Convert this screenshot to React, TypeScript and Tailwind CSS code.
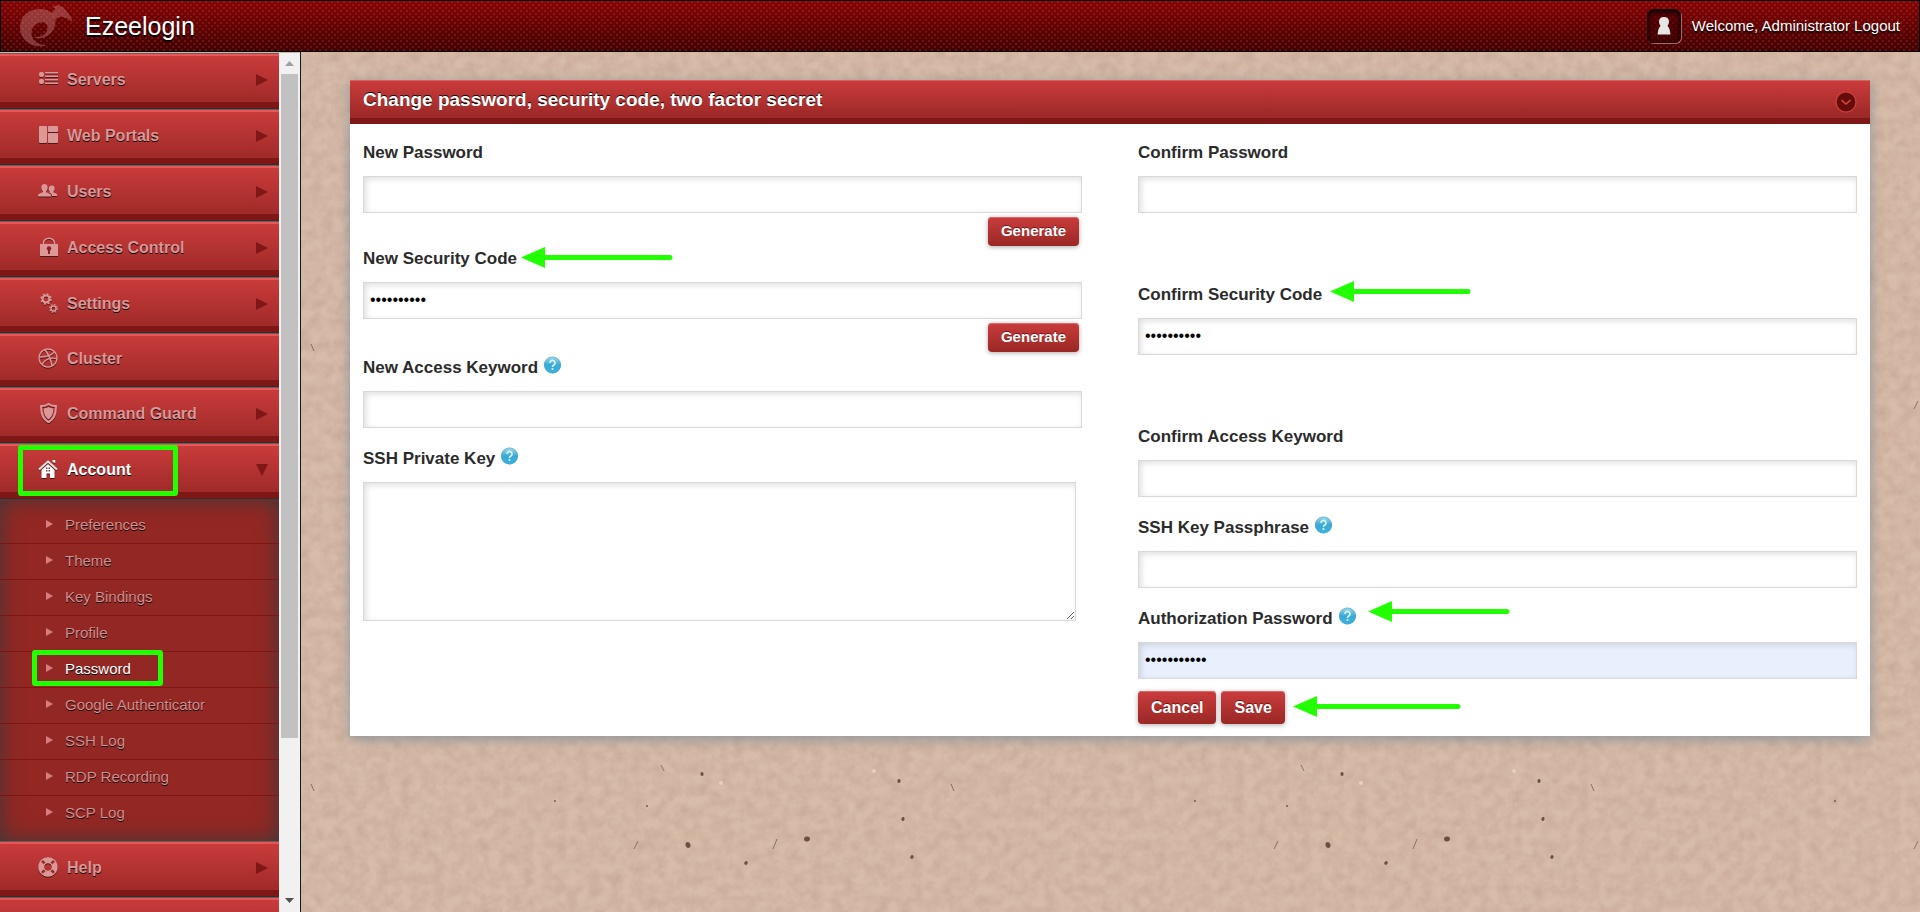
import type { ReactNode } from "react"
import { FaDribbble, FaLifeRing } from "react-icons/fa"

const menu = [
    { name: "Servers", icon: <ServersIcon />, sub: true },
    { name: "Web Portals", icon: <PortalsIcon />, sub: true },
    { name: "Users", icon: <UsersIcon />, sub: true },
    { name: "Access Control", icon: <LockIcon />, sub: true },
    { name: "Settings", icon: <GearsIcon />, sub: true },
    { name: "Cluster", icon: <FaDribbble size={20} />, sub: false },
    { name: "Command Guard", icon: <ShieldIcon />, sub: true },
]

const accountMenu = [
    "Preferences",
    "Theme",
    "Key Bindings",
    "Profile",
    "Password",
    "Google Authenticator",
    "SSH Log",
    "RDP Recording",
    "SCP Log",
]

function ServersIcon() {
    return (
        <svg width="20" height="20" viewBox="0 0 20 20" fill="currentColor">
            <rect x="1" y="3" width="5" height="5" rx="2" />
            <rect x="1" y="10" width="5" height="5" rx="2" />
            <path d="M7 3h13v1.500H7zM7 6.500h13V8H7zM7 10h13v1.500H7zM7 13.500h13V15H7z" />
        </svg>
    )
}

function PortalsIcon() {
    return (
        <svg width="20" height="20" viewBox="0 0 20 20" fill="currentColor">
            <rect x="1" y="1" width="8" height="17" rx="1" />
            <rect x="10" y="1" width="10" height="6" rx="1" />
            <rect x="10" y="8" width="10" height="10" rx="1" />
        </svg>
    )
}

function UsersIcon() {
    return (
        <svg width="20" height="20" viewBox="0 0 20 20" fill="currentColor">
            <path d="M6.500 3c2 0 3.200 1.400 3.200 3.500 0 1.600-.7 2.800-1.500 3.500v1.200l4 1.800c.6.300.8 1 .8 2.500H0c0-1.500.2-2.200.8-2.500l4-1.800V10C4 9.300 3.300 8.100 3.300 6.500 3.300 4.400 4.500 3 6.500 3z" />
            <path d="M14 4.500c1.700 0 2.700 1.200 2.700 3 0 1.300-.5 2.300-1.200 2.900v1l3 1.400c.5.300.7.900.7 2.200h-5.300c0-1.700-.5-2.600-1.700-3.100l-1-.5.600-1c-.6-.6-1-1.600-1-2.900 0-1.800 1.300-3 2.900-3z" />
        </svg>
    )
}

function LockIcon() {
    return (
        <svg width="20" height="20" viewBox="0 0 20 20">
            <path d="M5.500 8V6a5.500 4.800 0 0 1 11 0v2" fill="none" stroke="currentColor" strokeWidth="1.500" />
            <path d="M2 7h18v12H2z" fill="currentColor" />
            <circle cx="11" cy="11.500" r="2.200" fill="#8a2020" />
            <path d="M10 12h2v5h-2z" fill="#8a2020" />
        </svg>
    )
}

function GearsIcon() {
    return (
        <svg width="20" height="20" viewBox="0 0 20 20" fill="none" stroke="currentColor">
            <circle cx="8" cy="6" r="3.500" strokeWidth="2.200" />
            <circle cx="8" cy="6" r="5" strokeWidth="1.500" strokeDasharray="2 1.930" />
            <circle cx="15.500" cy="15.500" r="2.600" strokeWidth="1.500" />
            <circle cx="15.500" cy="15.500" r="3.900" strokeWidth="1.200" strokeDasharray="1.600 1.460" />
        </svg>
    )
}

function ShieldIcon() {
    return (
        <svg width="20" height="20" viewBox="0 0 20 20">
            <path d="M10.500 1c2 1.600 4.600 2.200 7.300 2.200.3 7.300-1.500 12.800-7.300 16C4.700 16 2.900 10.500 3.200 3.200 5.900 3.200 8.500 2.600 10.500 1z" fill="none" stroke="currentColor" strokeWidth="2.200" />
            <path d="M10.500 4c1.400 1 3.200 1.400 4.800 1.500 0 5-1.300 8.500-4.800 10.800-3.500-2.300-4.800-5.800-4.800-10.800 1.600-.1 3.400-.5 4.800-1.500z" fill="currentColor" />
        </svg>
    )
}

function HomeIcon() {
    return (
        <svg width="20" height="20" viewBox="0 0 20 20">
            <path d="M14.500 1h2.800v3l-2.800-1z" fill="#fff" />
            <path d="M1 10.500L10 2.500l9 8" fill="none" stroke="#f3e4e4" strokeWidth="2" />
            <path d="M3.500 11L10 5.300l6.500 5.700v8h-4.500v-4.500H8.500V19H3.500z" fill="#fff" />
            <path d="M8 8.500h1.500V10H8zM10.500 8.500H12V10h-1.500zM8 11h1.500v1.500H8zM10.500 11H12v1.500h-1.500z" fill="#7c3a3a" />
        </svg>
    )
}

function Logo() {
    return (
        <svg width="54" height="44" viewBox="19 4 54 44" fill="#c98080" fillOpacity=".42" aria-hidden="true">
            <path d="M47 45.500C31 49.500 20 39 20 27.500 20 16 29 9 40 9c5 0 9 1.500 12 4 3.500 4 4.500 9.500 2.500 14-2 5.500-6.500 9.500-12.500 11-3.500.8-6.500.3-8.500-1 8 .5 13.500-3 14-8.500.4-5-3.500-7-7.500-6-6 1.500-10 7.500-8 14 1.500 4.500 5 8 15 9z" />
            <path d="M52 7l6-2 5 2 5 6 3 4 1.500 5-5-3.500-7-2-5.500 3c-.8-2.500-2-4.500-3.500-6l4-5z" />
        </svg>
    )
}

function Paper() {
    const specks = [
        [27, 69, 1], [68, 108, 3], [126, 126, 2], [187, 102, 3],
        [279, 44, 2], [283, 82, 2], [292, 120, 2], [82, 37, 2], [410, 260, 1],
        [380, 420, 1], [508, 300, 1], [590, 190, 2], [575, 64, 1], [215, 240, 1],
    ]
    return (
        <svg className="absolute inset-0 size-full" aria-hidden="true">
            <filter id="grain" x="0" y="0" width="100%" height="100%">
                <feTurbulence type="fractalNoise" baseFrequency="0.09" numOctaves="5" seed="11" />
                <feColorMatrix values="0 0 0 0 .45  0 0 0 0 .3  0 0 0 0 .22  .6 .3 0 0 -.3" />
            </filter>
            <pattern id="specks" width="640" height="440" x="620" y="685" patternUnits="userSpaceOnUse">
                {specks.map(([x, y, r]) => (
                    <ellipse key={x} cx={x} cy={y} rx={r} ry={r * 0.8} fill="#6a4f42" transform={`rotate(${x} ${x} ${y})`} />
                ))}
                <path d="M41 28l3 6M331 47l3 7M153 112l4-10M14 112l4-8" stroke="#8b6d5e" fill="none" />
                <circle cx="101" cy="46" r="2" fill="#e5d0c2" />
                <circle cx="254" cy="34" r="2" fill="#e5d0c2" />
            </pattern>
            <rect width="100%" height="100%" filter="url(#grain)" />
            <rect width="100%" height="100%" fill="url(#specks)" />
        </svg>
    )
}

function MenuItem({ name, icon, sub, active }: { name: string; icon?: ReactNode; sub?: boolean; active?: boolean }) {
    return (
        <a
            href="#"
            className={`flex items-center border-t border-[#6b5a5a] bg-linear-to-b from-[#cb3c3c] to-[#992825] pr-[11px] pb-[3px] pl-[38px] shadow-[inset_0_2px_0_#e85757,inset_0_-1px_0_#3a2a2a,inset_0_-7px_0_#7f1717] text-base font-bold ${sub ? "h-14" : "h-[54px]"} ${active ? "text-white" : "text-[#dc9797]"}`}
        >
            <span className="w-5 pb-[2px] drop-shadow-[0_1px_0_#0008]">{icon}</span>
            <span className="ml-[9px] flex-1 [text-shadow:0_1px_0_#000]">{name}</span>
            {sub && (
                <svg width="12" height="12" viewBox="0 0 12 12" fill="#7f1717" className={active ? "rotate-90" : ""}>
                    <path d="M0 0l12 6-12 6z" />
                </svg>
            )}
        </a>
    )
}

function Help() {
    return (
        <button type="button" aria-label="Help" className="ml-[6px] size-[17px]">
            <svg width="17" height="18" viewBox="0 0 17 18">
                <defs>
                    <linearGradient id="ball" x1="0" y1="0" x2="0" y2="1">
                        <stop offset="0" stopColor="#a5dcec" />
                        <stop offset=".5" stopColor="#3aa9d6" />
                        <stop offset="1" stopColor="#36b4e4" />
                    </linearGradient>
                </defs>
                <circle cx="8.500" cy="9" r="8.500" fill="url(#ball)" />
                <circle cx="8.500" cy="9" r="8" fill="none" stroke="#4f9fb8" strokeOpacity=".5" />
                <path d="M6 7a2.500 2.500 0 1 1 3.800 2.100c-.9.500-1.300.9-1.300 1.900" fill="none" stroke="#d8f3fa" strokeWidth="1.700" />
                <circle cx="8.500" cy="13" r="1.100" fill="#d8f3fa" />
            </svg>
        </button>
    )
}

// green pointer laid over the form, tip on the left
function Arrow({ length, className }: { length: number; className: string }) {
    return (
        <svg width={length} height="21" className={`absolute ${className}`} aria-hidden="true">
            <path d="M0 10.500L24 0v21z" fill="#22ff00" />
            <path d={`M22 10.500H${length - 3}`} stroke="#22ff00" strokeWidth="5" strokeLinecap="round" />
        </svg>
    )
}

const inset = "block w-full border border-[#d9d9d9] bg-white shadow-[inset_2px_2px_6px_#0002] outline-none"

function Label({ id, text, help, arrow }: { id: string; text: string; help?: boolean; arrow?: ReactNode }) {
    return (
        <div className={`flex pb-[11px] ${help ? "pt-[3px]" : ""}`}>
            <div className="relative flex">
                <label htmlFor={id} className="text-[17px] leading-6 font-bold text-[#2b2b2b]">{text}</label>
                {help && <Help />}
                {arrow}
            </div>
        </div>
    )
}

function Field({ id, text, help, arrow, value = "", filled }: { id: string; text: string; help?: boolean; arrow?: ReactNode; value?: string; filled?: boolean }) {
    return (
        <div>
            <Label id={id} text={text} help={help} arrow={arrow} />
            <input id={id} type="password" defaultValue={value} className={`${inset} h-[37px] px-[6px] pb-[2px] text-base text-black ${filled ? "bg-[#e8f0fe]!" : ""}`} />
        </div>
    )
}

const btn = "rounded-[4px] bg-linear-to-b from-[#cb3c3c] to-[#992825] px-[13px] font-bold text-white shadow-[0_1px_5px_#0005,inset_0_1px_0_#d86a6a] [text-shadow:0_-1px_0_#7a1515]"

function Generate() {
    return (
        <div className="flex h-[34px] justify-end pt-1 pr-[3px]">
            <button type="button" className={`${btn} h-[29px] text-[15px]`}>Generate</button>
        </div>
    )
}

export default function App() {
    return (
        <div className="flex h-screen flex-col overflow-hidden bg-[#d8bcaa] font-['Liberation_Sans',Arial,sans-serif]">
            <header className="relative z-10 flex h-[52px] shrink-0 items-center border border-black bg-[#5a0000] bg-[radial-gradient(circle_at_1px_1px,#ff808028_1px,transparent_1px),radial-gradient(circle_at_4px_4px,#ff808028_1px,transparent_1px),linear-gradient(#850404,#420000)] bg-size-[6px_6px,6px_6px,100%_100%] pr-[19px] pl-[18px]">
                <Logo />
                <h1 className="ml-3 flex-1 pt-[2px] text-[25px] text-white [text-shadow:0_2px_1px_#000]">Ezeelogin</h1>
                <div className="flex size-[34px] items-center justify-center rounded-[6px] border border-[#1c0505] bg-[#3b000088] shadow-[inset_0_2px_5px_#000,1px_1px_0_#b06060]">
                    <svg width="14" height="18" viewBox="0 0 14 18" fill="#e6e6e6">
                        <path d="M7 0c3.200 0 5 2 5 4.800 0 2-1 3-1.500 4L12.500 12l1 5.500H.5l1-5.500 2-3.200C3 7.800 2 6.800 2 4.800 2 2 3.800 0 7 0z" />
                    </svg>
                </div>
                <p className="ml-[11px] text-[15px] text-white [text-shadow:0_2px_1px_#000]">
                    Welcome, <a href="#">Administrator</a> <a href="#">Logout</a>
                </p>
            </header>

            <div className="relative flex min-h-0 flex-1">
                <Paper />

                <aside className="relative flex w-[301px] shrink-0 border-r border-[#111820] pt-px">
                    <nav className="flex-1 overflow-hidden">
                        {menu.map((item) => (
                            <MenuItem key={item.name} {...item} />
                        ))}
                        <div className="relative">
                            <MenuItem name="Account" icon={<HomeIcon />} sub active />
                            <div className="absolute top-[2px] left-[18px] h-[51px] w-[160px] rounded-[3px] border-[5px] border-[#22ff00]"></div>
                        </div>
                        <ul className="bg-[#932723] py-[9px] shadow-[inset_0_0_22px_#3a3a3a]">
                            {accountMenu.map((name) => (
                                <li key={name} className="relative border-b border-[#7f1414] last:border-transparent">
                                    <a href="#" className={`flex h-[35px] items-center pl-[46px] text-[15px] [text-shadow:0_1px_0_#000] ${name === "Password" ? "text-white" : "text-[#d68e8e]"}`}>
                                        <svg width="7" height="8" viewBox="0 0 7 8" fill="#d67e7e" className="mb-[3px]">
                                            <path d="M0 0l7 4-7 4z" />
                                        </svg>
                                        <span className="ml-3">{name}</span>
                                    </a>
                                    {name === "Password" && (
                                        <div className="absolute -top-[2px] left-8 h-9 w-[131px] rounded-[3px] border-[5px] border-[#22ff00]"></div>
                                    )}
                                </li>
                            ))}
                        </ul>
                        <MenuItem name="Help" icon={<FaLifeRing size={20} />} sub />
                        <MenuItem name="" />
                    </nav>
                    {/* scrollbar */}
                    <div className="flex w-[21px] flex-col items-center bg-[#f1f1f1]">
                        <div className="flex h-[21px] items-center">
                            <svg width="9" height="5" fill="#a0a0a0"><path d="M0 5l4.500-5L9 5z" /></svg>
                        </div>
                        <div className="w-[17px] flex-[663] bg-[#c1c1c1]"></div>
                        <div className="flex flex-[165] flex-col justify-end pb-[9px]">
                            <svg width="9" height="5" fill="#505050"><path d="M0 0l4.500 5L9 0z" /></svg>
                        </div>
                    </div>
                </aside>

                <main className="relative flex-1 pt-7 pr-[50px] pl-[49px]">
                    <section className="bg-white shadow-[0_3px_12px_#8b9499]">
                        <div className="flex h-11 items-center justify-between bg-linear-to-b from-[#cb3c3c] to-[#932523] pr-[13px] pb-1 pl-[13px] shadow-[inset_0_1px_0_#d86060,inset_0_-6px_0_#7f1717]">
                            <h2 className="pt-px text-[19px] font-bold text-white [text-shadow:0_-1px_0_#000]">Change password, security code, two factor secret</h2>
                            <button type="button" aria-label="Collapse" className="mt-1">
                                <svg width="22" height="22" viewBox="0 0 22 22" fill="none">
                                    <circle cx="11" cy="11" r="10" fill="#650c0c" stroke="#d0433a" strokeWidth="1.200" />
                                    <path d="M6.500 9l4.500 4L15.500 9" stroke="#dd4a42" strokeWidth="1.500" />
                                </svg>
                            </button>
                        </div>

                        <form className="grid grid-cols-2 gap-14 px-[13px] pt-[17px] pb-3">
                            <div>
                                <Field id="pwd" text="New Password" />
                                <Generate />
                                <Field id="code" text="New Security Code" value="abcdefghij" arrow={<Arrow length={152} className="top-0 left-full ml-1" />} />
                                <Generate />
                                <Field id="keyword" text="New Access Keyword" help />
                                <div className="pt-4">
                                    <Label id="key" text="SSH Private Key" help />
                                    <div className="pr-[6px]">
                                        <textarea id="key" className={`${inset} h-[139px] resize`}></textarea>
                                    </div>
                                </div>
                            </div>

                            <div>
                                <Field id="pwd2" text="Confirm Password" />
                                <div className="pt-[70px]">
                                    <Field id="code2" text="Confirm Security Code" value="abcdefghij" arrow={<Arrow length={141} className="-top-[2px] left-full ml-2" />} />
                                </div>
                                <div className="pt-[70px]">
                                    <Field id="keyword2" text="Confirm Access Keyword" />
                                </div>
                                <div className="pt-4">
                                    <Field id="phrase" text="SSH Key Passphrase" help />
                                </div>
                                <div className="pt-4">
                                    <Field id="auth" text="Authorization Password" help value="abcdefghijk" filled arrow={<Arrow length={142} className="-top-[6px] left-full ml-3" />} />
                                </div>
                                <div className="flex gap-[5px] pt-3">
                                    <button type="button" className={`${btn} h-[33px] text-base`}>Cancel</button>
                                    <div className="relative">
                                        <button type="submit" className={`${btn} h-[33px] text-base`}>Save</button>
                                        <Arrow length={168} className="top-[5px] left-full ml-2" />
                                    </div>
                                </div>
                            </div>
                        </form>
                    </section>
                </main>
            </div>
        </div>
    )
}
